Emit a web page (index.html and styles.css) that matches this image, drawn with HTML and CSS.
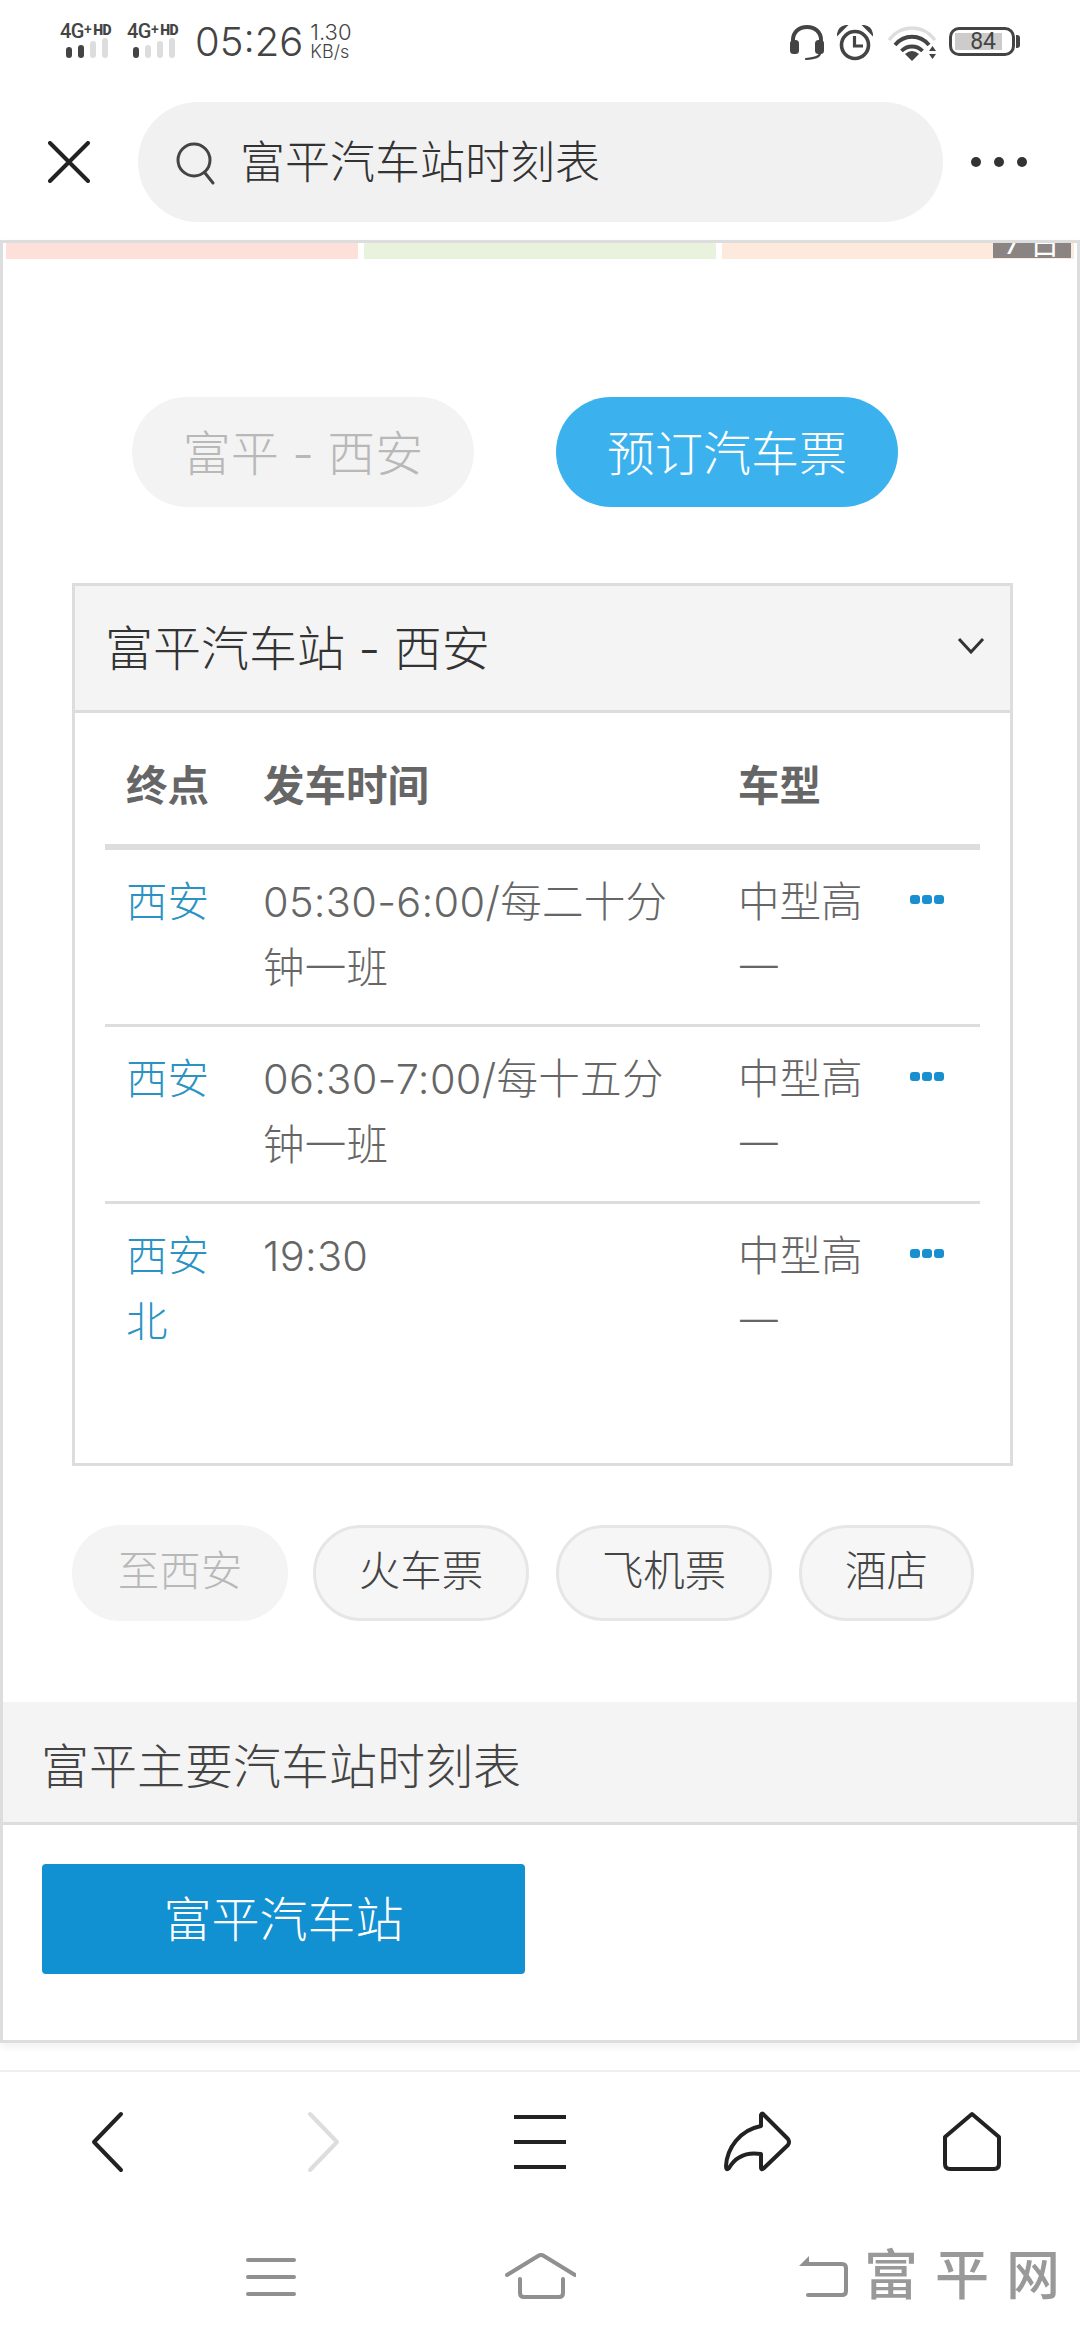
FILE: index.html
```html
<!DOCTYPE html>
<html lang="zh">
<head>
    <meta charset="UTF-8">
    <title>富平汽车站时刻表</title>
    <link rel="stylesheet" href="styles.css">
</head>
<body>
    <div class="status">
        <div class="sim">
            <div class="sim-label">4G<sup>+</sup><b>HD</b></div>
            <div class="bars"><i class="on h1"></i><i class="on h2"></i><i class="h3"></i><i class="h4"></i></div>
        </div>
        <div class="sim">
            <div class="sim-label">4G<sup>+</sup><b>HD</b></div>
            <div class="bars"><i class="on h1"></i><i class="h2"></i><i class="h3"></i><i class="h4"></i></div>
        </div>
        <div class="clock">05:26</div>
        <div class="speed"><span>1.30</span><span class="unit">KB/s</span></div>
        <div class="status-right">
            <svg class="s-headset" width="36" height="36" viewBox="0 0 36 36">
                <path d="M4 19V15C4 7 10 2 18 2S32 7 32 15V19" fill="none" stroke="#444" stroke-width="4"/>
                <rect x="1" y="15" width="9" height="14" rx="3.5" fill="#444"/>
                <rect x="26" y="15" width="9" height="14" rx="3.5" fill="#444"/>
                <path d="M31 28C31 32 26 33 17 34" fill="none" stroke="#444" stroke-width="2.2" stroke-linecap="round"/>
            </svg>
            <svg class="s-alarm" width="36" height="36" viewBox="0 0 36 36">
                <circle cx="18" cy="20" r="13.5" fill="none" stroke="#444" stroke-width="3.6"/>
                <path d="M17.5 11V21H26" fill="none" stroke="#444" stroke-width="3.2"/>
                <path d="M1 9Q2 2 9 1L1 9ZM35 9Q34 2 27 1L35 9Z" fill="#444" stroke="#444" stroke-width="2"/>
            </svg>
            <svg class="s-wifi" width="50" height="36" viewBox="0 0 50 36">
                <path d="M1 15C13 -1 35 -1 47 15" fill="none" stroke="#ddd" stroke-width="3.4"/>
                <path d="M7 20C16 9 32 9 41 20" fill="none" stroke="#444" stroke-width="3.8"/>
                <path d="M13.5 26C19 20 29 20 34.5 26" fill="none" stroke="#444" stroke-width="3.8"/>
                <path d="M17 29Q24 23 31 29L24 36Z" fill="#444"/>
                <path d="M41 26L44.5 21L48 26ZM41 29H48L44.5 34Z" fill="#444"/>
            </svg>
            <div class="battery"><div class="battery-level">84</div></div>
        </div>
    </div>

    <div class="toolbar">
        <svg class="close" width="42" height="42" viewBox="0 0 42 42">
            <path d="M2 2L40 40M40 2L2 40" stroke="#222" stroke-width="4" stroke-linecap="round"/>
        </svg>
        <div class="search">
            <svg width="40" height="44" viewBox="0 0 40 44">
                <circle cx="18" cy="18" r="16" fill="none" stroke="#444" stroke-width="3"/>
                <path d="M29 31L37 41" stroke="#444" stroke-width="3" stroke-linecap="round"/>
            </svg>
            <span>富平汽车站时刻表</span>
        </div>
        <div class="more"><i></i><i></i><i></i></div>
    </div>

    <div class="card">
        <div class="strip">
            <div class="strip-red"></div>
            <div class="strip-green"></div>
            <div class="strip-orange"></div>
            <div class="strip-badge"><span>7 日</span></div>
        </div>

        <div class="actions">
            <a class="pill pill-off">富平 - 西安</a>
            <a class="pill pill-on">预订汽车票</a>
        </div>

        <div class="box">
            <div class="box-head">
                <span>富平汽车站 - 西安</span>
                <svg width="28" height="17" viewBox="0 0 28 17">
                    <path d="M2 2L14 15L26 2" fill="none" stroke="#333" stroke-width="3"/>
                </svg>
            </div>
            <table class="times">
                <colgroup><col class="c1"><col class="c2"><col class="c3"><col class="c4"></colgroup>
                <thead>
                    <tr><th>终点</th><th>发车时间</th><th>车型</th><th></th></tr>
                </thead>
                <tbody>
                    <tr>
                        <td><a>西安</a></td>
                        <td class="time">05:30-6:00/每二十分钟一班</td>
                        <td>中型高一</td>
                        <td><div class="dots"><i></i><i></i><i></i></div></td>
                    </tr>
                    <tr>
                        <td><a>西安</a></td>
                        <td class="time">06:30-7:00/每十五分钟一班</td>
                        <td>中型高一</td>
                        <td><div class="dots"><i></i><i></i><i></i></div></td>
                    </tr>
                    <tr>
                        <td><a>西安北</a></td>
                        <td class="time">19:30</td>
                        <td>中型高一</td>
                        <td><div class="dots"><i></i><i></i><i></i></div></td>
                    </tr>
                </tbody>
            </table>
        </div>

        <div class="chips">
            <a class="chip chip-off">至西安</a>
            <a class="chip">火车票</a>
            <a class="chip">飞机票</a>
            <a class="chip chip-short">酒店</a>
        </div>

        <div class="section-head">富平主要汽车站时刻表</div>
        <a class="station">富平汽车站</a>
    </div>

    <div class="nav">
        <div class="nav-row">
            <svg width="72" height="72" viewBox="0 0 72 72"><path d="M49 8L22 36L49 64" fill="none" stroke="#222" stroke-width="4" stroke-linecap="round" stroke-linejoin="round"/></svg>
            <svg width="72" height="72" viewBox="0 0 72 72"><path d="M22 8L49 36L22 64" fill="none" stroke="#ddd" stroke-width="4" stroke-linecap="round" stroke-linejoin="round"/></svg>
            <svg width="72" height="72" viewBox="0 0 72 72"><path d="M10 11H62M10 36H62M10 61H62" stroke="#222" stroke-width="4"/></svg>
            <svg width="72" height="72" viewBox="0 0 72 72"><path d="M41 9Q42 6 44 9L68 33Q70 36 68 39L44 62Q41 65 41 61V48C28 46 16 50 9 62Q6 65 6 60C7 42 20 24 41 20Z" fill="none" stroke="#222" stroke-width="4" stroke-linejoin="round"/></svg>
            <svg width="72" height="72" viewBox="0 0 72 72"><path d="M36 8L9 31V58Q9 63 14 63H58Q63 63 63 58V31Z" fill="none" stroke="#222" stroke-width="4" stroke-linejoin="round"/></svg>
        </div>
        <div class="nav-row sys">
            <svg width="72" height="72" viewBox="0 0 72 72"><path d="M14 19H60M14 36H60M14 53H60" stroke="#909090" stroke-width="4" stroke-linecap="round"/></svg>
            <svg width="72" height="72" viewBox="0 0 72 72"><path d="M3 34L34 15Q37 13 40 15L71 34M16 38V52Q16 56 20 56H55Q59 56 59 52V38" fill="none" stroke="#909090" stroke-width="4" stroke-linecap="round"/></svg>
            <svg class="sys-back" width="72" height="72" viewBox="0 0 72 72">
                <path d="M35 15L25 25H35Z" fill="#909090"/>
                <path d="M33 23H68Q72 23 72 27V50Q72 54 68 54H34" fill="none" stroke="#909090" stroke-width="4" stroke-linecap="round"/>
            </svg>
            <div class="logo">富平网</div>
        </div>
    </div>
</body>
</html>
```

FILE: styles.css
```css
*{
    box-sizing: border-box;
}
html, body{
    margin: 0;
    padding: 0;
}
body{
    width: 1080px;
    height: 2340px;
    overflow: hidden;
    background: #fff;
    font-family: Inter, "Noto Sans CJK SC", sans-serif;
    font-weight: 300;
    color: #444;
}
a{
    display: block;
}

/* status bar */
.status{
    display: flex;
    height: 102px;
    padding: 23px 57px 0 60px;
    align-items: flex-start;
    color: #444;
}
.sim{
    width: 67px;
}
.sim-label{
    height: 15px;
    font-family: Roboto, sans-serif;
    font-size: 20px;
    line-height: 15px;
    font-weight: 500;
    white-space: nowrap;
    letter-spacing: -0.5px;
}
.sim-label sup{
    font-size: 14px;
    line-height: 0;
    vertical-align: 4px;
}
.sim-label b{
    margin-left: 2px;
    font-size: 14px;
    font-weight: 900;
    vertical-align: 3px;
}
.bars{
    display: flex;
    align-items: flex-end;
    gap: 6px;
    margin: 0 0 0 6px;
    height: 20px;
}
.bars i{
    display: block;
    width: 6px;
    background: #ddd;
    border-radius: 3px;
}
.bars i.on{
    background: #444;
}
.bars .h1{ height: 11px; }
.bars .h2{ height: 13px; }
.bars .h3{ height: 17px; }
.bars .h4{ height: 20px; }
.clock{
    margin: -4px 0 0 1px;
    font-size: 40px;
    line-height: 46px;
    font-weight: 300;
}
.speed{
    display: flex;
    flex-direction: column;
    margin: -1px 0 0 7px;
    font-size: 22px;
    line-height: 21px;
}
.speed .unit{
    font-size: 18px;
    line-height: 17px;
}
.status-right{
    display: flex;
    align-items: flex-start;
    gap: 12px;
    margin-left: auto;
}
.s-headset{
    margin-top: 2px;
}
.s-alarm{
    margin-top: 2px;
    margin-right: 3px;
}
.s-wifi{
    margin: 2px 2px 0 0;
}
.battery{
    position: relative;
    width: 66px;
    height: 29px;
    margin: 4px 8px 0 -3px;
    padding: 3px;
    border: 3px solid #444;
    border-radius: 10px;
}
.battery:after{
    content: "";
    position: absolute;
    right: -8px;
    top: 5px;
    width: 4px;
    height: 13px;
    background: #444;
    border-radius: 0 3px 3px 0;
}
.battery-level{
    width: 47px;
    height: 17px;
    background: #ccc;
    font-family: Roboto, sans-serif;
    font-size: 23px;
    line-height: 17px;
    text-align: right;
    padding-right: 6px;
    font-weight: 400;
}

/* search row */
.toolbar{
    display: flex;
    align-items: center;
    height: 120px;
    margin-bottom: 18px;
    padding-left: 48px;
}
.close{
    flex: none;
}
.search{
    display: flex;
    align-items: center;
    width: 805px;
    height: 120px;
    margin-left: 48px;
    padding-left: 38px;
    background: #f1f1f1;
    border-radius: 60px;
}
.search svg{
    margin-top: 4px;
}
.search span{
    margin: -5px 0 0 24px;
    font-size: 45px;
    color: #333;
}
.more{
    display: flex;
    gap: 13px;
    margin-left: 28px;
}
.more i{
    display: block;
    width: 10px;
    height: 10px;
    border-radius: 50%;
    background: #333;
}

/* page card */
.card{
    height: 1803px;
    border: 3px solid #ddd;
    box-shadow: 0 4px 8px rgba(0,0,0,.06);
}
.strip{
    position: relative;
    display: flex;
    gap: 6px;
    padding: 0 3px;
    height: 16px;
}
.strip div{
    flex: 1;
}
.strip-red{
    background: #fde0da;
}
.strip-green{
    background: #e8f2dc;
}
.strip-orange{
    background: #fdeadd;
}
.strip .strip-badge{
    position: absolute;
    right: 6px;
    top: 0;
    width: 78px;
    height: 15px;
    background: #8a8582;
    overflow: hidden;
    color: #fff;
    text-align: center;
    font-size: 30px;
    line-height: 1px;
    font-weight: 400;
}

.actions{
    display: flex;
    gap: 82px;
    margin-top: 138px;
    padding-left: 129px;
}
.pill{
    width: 342px;
    height: 110px;
    border-radius: 55px;
    font-size: 48px;
    line-height: 114px;
    text-align: center;
}
.pill-off{
    background: #f3f3f3;
    color: #b8b8b8;
}
.pill-on{
    background: #3bb2ee;
    color: #fff;
}

/* timetable */
.box{
    width: 941px;
    height: 883px;
    margin: 76px 0 0 69px;
    border: 3px solid #ddd;
}
.box-head{
    display: flex;
    align-items: center;
    justify-content: space-between;
    height: 127px;
    padding: 0 25px 6px 30px;
    background: #f4f4f4;
    border-bottom: 3px solid #ddd;
    font-size: 48px;
    color: #333;
}
.times{
    width: 875px;
    margin: 0 0 0 30px;
    border-collapse: separate;
    border-spacing: 0;
    table-layout: fixed;
    color: #666;
    font-size: 41.5px;
    line-height: 66px;
}
.c1{ width: 137px; }
.c2{ width: 475px; }
.c3{ width: 172px; }
.c4{ width: 91px; }
.times th{
    height: 137px;
    padding: 14px 0 0 21px;
    text-align: left;
    font-weight: 700;
    border-bottom: 6px solid #ddd;
}
.times td{
    padding: 19px 16px 23px 21px;
    vertical-align: top;
    border-bottom: 3px solid #ddd;
    word-break: break-all;
}
.times td.time{
    padding-right: 24px;
    letter-spacing: .3px;
}
.times tr:last-child td{
    border-bottom: none;
}
.times td a{
    color: #2a93c4;
}
.dots{
    display: flex;
    gap: 2px;
    margin-top: 26px;
}
.dots i{
    display: block;
    width: 10px;
    height: 9px;
    border-radius: 3px;
    background: #1a8fd0;
}

.chips{
    display: flex;
    gap: 27px;
    margin: 59px 0 0 69px;
}
.chip{
    width: 216px;
    height: 96px;
    background: #f6f6f6;
    border: 3px solid #e6e6e6;
    border-radius: 48px;
    font-size: 41.5px;
    line-height: 86px;
    text-align: center;
    color: #444;
}
.chip-off{
    margin-right: -2px;
    background: #f4f4f4;
    border-color: #f4f4f4;
    color: #b8b8b8;
}
.chip-short{
    width: 175px;
}

.section-head{
    height: 123px;
    margin-top: 81px;
    padding-left: 38px;
    background: #f4f4f4;
    border-bottom: 3px solid #ddd;
    font-size: 48px;
    line-height: 130px;
    color: #444;
}
.station{
    width: 483px;
    height: 110px;
    margin: 39px 0 0 39px;
    background: #1190d2;
    border-radius: 4px;
    color: #fff;
    font-size: 48px;
    line-height: 112px;
    text-align: center;
}

/* bottom bars */
.nav{
    margin-top: 27px;
    border-top: 2px solid #f0f0f0;
}
.nav-row{
    display: grid;
    grid-template-columns: repeat(5, 216px);
    justify-items: center;
    padding-top: 34px;
}
.nav-row.sys{
    position: relative;
    grid-template-columns: repeat(3, 270px);
    padding: 63px 0 0 135px;
}
.sys-back{
    overflow: visible;
}
.logo{
    position: absolute;
    right: 3px;
    top: 66px;
    font-size: 54px;
    line-height: 64px;
    font-weight: 500;
    letter-spacing: 17px;
    color: #999;
    white-space: nowrap;
}
```
